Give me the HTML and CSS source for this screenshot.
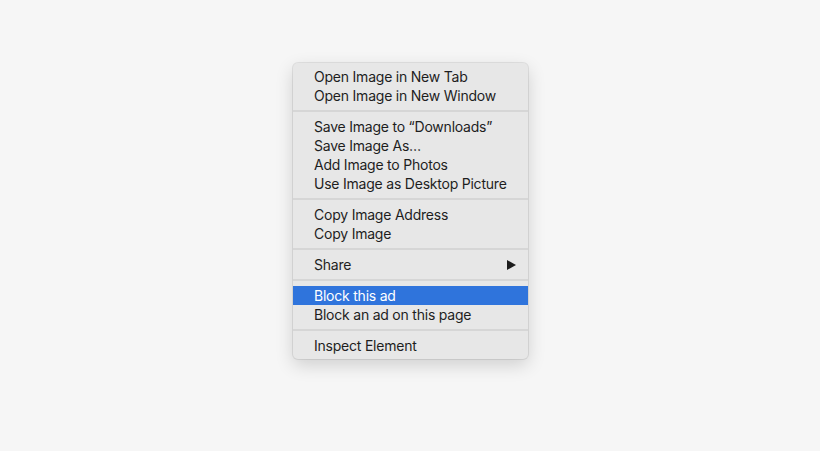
FILE: index.html
```html
<!DOCTYPE html>
<html>
<head>
<meta charset="utf-8">
<link rel="stylesheet" href="styles.css">
</head>
<body>
<div class="stage">
  <div class="menu">
    <div class="item">Open Image in New Tab</div>
    <div class="item">Open Image in New Window</div>
    <div class="sep"></div>
    <div class="item">Save Image to “Downloads”</div>
    <div class="item">Save Image As…</div>
    <div class="item">Add Image to Photos</div>
    <div class="item">Use Image as Desktop Picture</div>
    <div class="sep"></div>
    <div class="item">Copy Image Address</div>
    <div class="item">Copy Image</div>
    <div class="sep"></div>
    <div class="item submenu"><span>Share</span><svg class="arrow" width="9" height="10" viewBox="0 0 9 10"><path d="M0 0 L9 5 L0 10 Z" fill="#1c1c1c"/></svg></div>
    <div class="sep"></div>
    <div class="item active">Block this ad</div>
    <div class="item">Block an ad on this page</div>
    <div class="sep"></div>
    <div class="item">Inspect Element</div>
  </div>
</div>
</body>
</html>
```
FILE: styles.css
```css
html, body {
  margin: 0;
  padding: 0;
  background: #f6f6f6;
  width: 820px;
  height: 451px;
  overflow: hidden;
}
.stage {
  padding-top: 63px;
  padding-left: 293px;
}
.menu {
  width: 235px;
  box-sizing: border-box;
  padding: 4px 0;
  background: #e7e7e7;
  border-radius: 5px;
  box-shadow: 0 0 0 1px rgba(0,0,0,0.08), 0 6px 18px rgba(0,0,0,0.16);
  font-family: "Inter", "Liberation Sans", sans-serif;
  font-size: 14px;
  letter-spacing: -0.22px;
  color: #1e1e1e;
}
.item {
  height: 19px;
  line-height: 19px;
  padding-left: 21px;
  padding-right: 12px;
  white-space: nowrap;
}
.item.active {
  background: #2f74dc;
  color: #ffffff;
}
.submenu {
  display: flex;
  align-items: center;
  justify-content: space-between;
}
.sep {
  height: 12px;
  display: flex;
  align-items: center;
}
.sep::before {
  content: "";
  display: block;
  width: 100%;
  height: 2px;
  background: #d6d6d6;
}
```
